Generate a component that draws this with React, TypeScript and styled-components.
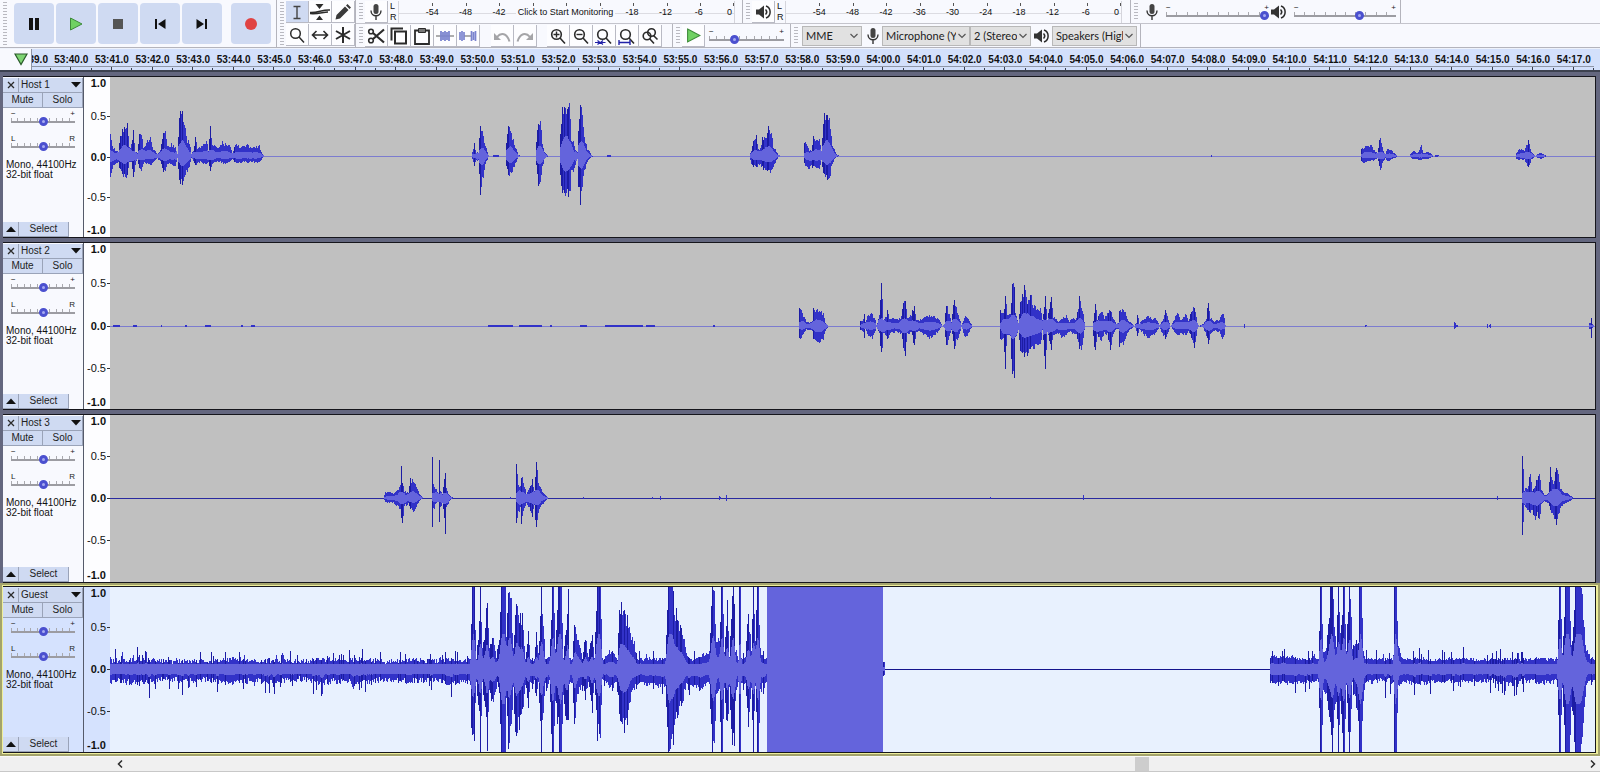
import React from "react";
import styled, { createGlobalStyle, css } from "styled-components";

const sans = `"Liberation Sans", Arial, sans-serif`;
const ui = `Lato, "Open Sans", sans-serif`;

const GlobalStyle = createGlobalStyle`
  *, *::before, *::after { box-sizing: border-box; }
  body { margin: 0; background: #f0f0f0; font-family: ${sans}; color: #111; }
  button, input, select { font: inherit; color: inherit; margin: 0; }
  button { padding: 0; border: 0; background: none; }
`;

/* ---------- toolbars ---------- */

const Window = styled.div`
  min-height: 100vh;
  display: flex;
  flex-direction: column;
  overflow: hidden;
`;

const Toolbars = styled.header`
  display: flex;
  height: 48px;
  background: #f8f9fe;
  border-bottom: 1px solid #b4b4bc;
`;

const Grip = styled.span`
  flex: none;
  width: 4px;
  margin: 2px 2px 2px 3px;
  background: repeating-linear-gradient(#b9b9c0 0 1px, transparent 1px 3px);
`;

const Transport = styled.div`
  display: flex;
  flex: none;
  width: 277px;
  border-right: 1px solid #b4b4bc;
`;

const TransportButton = styled.button<{ $apart?: boolean }>`
  display: grid;
  place-items: center;
  width: 40px;
  height: 41px;
  margin: 3px 2px 0 ${(p) => (p.$apart ? "7px" : "0")};
  border-radius: 4px;
  background: #cfdaf2;
`;

const Tools = styled.div`
  display: flex;
  flex: none;
  width: 79px;
  border-right: 1px solid #b4b4bc;
`;

const ToolGrid = styled.div`
  display: grid;
  grid-template: repeat(2, 23px) / repeat(3, 23px);
  padding-top: 1px;
`;

const ToolButton = styled.button<{ $on?: boolean }>`
  display: grid;
  place-items: center;
  flex: none;
  width: 23px;
  height: 22px;
  background: ${(p) => (p.$on ? "#cfdaf2" : "#fdfdff")};
  border-right: 1px solid #b9bac4;
  border-bottom: 1px solid #b9bac4;
`;

const Rows = styled.div`
  flex: 1;
  min-width: 0;
`;

const Row = styled.div`
  display: flex;
  height: 24px;
  border-bottom: 1px solid #c4c4cc;
  &:last-child { border-bottom: 0; height: 23px; }
`;

const Bar = styled.div<{ $w: number }>`
  display: flex;
  align-items: center;
  align-self: stretch;
  flex: none;
  width: ${(p) => p.$w}px;
  padding-top: 1px;
  border-right: 1px solid #b4b4bc;
  ${Grip} { align-self: stretch; }
`;

const Gap = styled.span<{ $w: number }>`
  flex: none;
  width: ${(p) => p.$w}px;
`;

const LR = styled.span`
  display: flex;
  flex-direction: column;
  flex: none;
  width: 10px;
  padding-left: 2px;
  font-size: 9px;
  line-height: 11px;
`;

const Meter = styled.div`
  display: flex;
  flex-direction: column;
  flex: none;
  width: 337px;
  height: 22px;
  padding-top: 2px;
  border-left: 1px solid #d5d5dc;
  border-right: 1px solid #d5d5dc;
  background: linear-gradient(#dcdce2, #dcdce2) 0 12px / 100% 1px no-repeat;
`;

const Scale = styled.div`
  display: flex;
`;

const MeterTick = styled.i<{ $end?: boolean }>`
  display: flex;
  flex: ${(p) => (p.$end ? 0.5 : 1)} 1 0;
  height: 3px;
  justify-content: ${(p) => (p.$end ? "flex-end" : "center")};
  &::before { content: ""; width: 1px; background: #555; }
`;

const MeterPad = styled.i`
  flex: 0.5 1 0;
`;

const MeterLabel = styled.span<{ $end?: boolean }>`
  flex: ${(p) => (p.$end ? 0.5 : 1)} 1 0;
  min-width: 0;
  text-align: ${(p) => (p.$end ? "right" : "center")};
  padding-right: ${(p) => (p.$end ? 2 : 0)}px;
  font-size: 9px;
  line-height: 12px;
`;

const MonitorButton = styled.button`
  flex: 3 1 0;
  min-width: 0;
  height: 13px;
  background: linear-gradient(#f8f9fe, #f8f9fe) center / 100px 100% no-repeat;
  font-size: 9px;
  line-height: 13px;
  white-space: nowrap;
`;

const SelectBox = styled.label<{ $w: number }>`
  display: grid;
  flex: none;
  width: ${(p) => p.$w}px;
  height: 20px;
  > * { grid-area: 1 / 1; }
  > svg { place-self: center end; margin-right: 4px; pointer-events: none; }
`;

const Select = styled.select`
  appearance: none;
  width: 100%;
  height: 20px;
  padding: 0 13px 0 3px;
  border: 1px solid #b8b8b8;
  border-radius: 0;
  background: #e1e1e1;
  font: 11px/16px ${ui};
  color: #222;
`;

const SliderBox = styled.label<{ $w: number }>`
  display: flex;
  flex-direction: column;
  flex: none;
  width: ${(p) => p.$w}px;
`;

const SliderMarks = styled.span`
  display: flex;
  justify-content: space-between;
  height: 7px;
  font-size: 8px;
  line-height: 8px;
  color: #222;
`;

const Range = styled.input`
  appearance: none;
  display: block;
  width: 100%;
  height: 9px;
  background:
    linear-gradient(#9c9ca2, #9c9ca2) 0 4px / 100% 2px no-repeat,
    repeating-linear-gradient(90deg, #a9a9ae 0 1px, transparent 1px 10%) 0 1px / 100% 4px no-repeat;
  &::-webkit-slider-thumb {
    appearance: none;
    width: 9px;
    height: 9px;
    border-radius: 50%;
    border: 3px solid #4b50cf;
    background: #a6aaf0;
  }
`;

/* ---------- timeline ---------- */

const Timeline = styled.div`
  display: flex;
  height: 24px;
  background: #d3e0fb;
  border-top: 1px solid #eef2fb;
  border-bottom: 2px solid #3d4250;
`;

const PinCell = styled.div`
  display: flex;
  justify-content: flex-end;
  flex: none;
  width: 32px;
  padding: 4px 3px 0 0;
  background: #f8f9fe;
  border-right: 1px solid #8f94a4;
`;

const TimeScale = styled.div`
  display: flex;
  flex: 1;
  min-width: 0;
  overflow: hidden;
`;

const TimeCell = styled.div<{ $cut?: boolean }>`
  display: flex;
  flex-direction: column;
  align-items: ${(p) => (p.$cut ? "flex-end" : "stretch")};
  flex: 0 0 ${(p) => (p.$cut ? "1.21%" : "2.5906%")};
  overflow: ${(p) => (p.$cut ? "hidden" : "visible")};
  padding-top: 5px;
`;

const TimeText = styled.span<{ $cut?: boolean }>`
  height: 12px;
  padding-right: ${(p) => (p.$cut ? 3 : 0)}px;
  font-size: 10px;
  font-weight: 700;
  line-height: 12px;
  text-align: center;
  white-space: nowrap;
`;

const TimeTicks = styled.span`
  display: flex;
  align-items: flex-end;
  width: 100%;
  height: 4px;
  border-top: 1px solid #8f97a8;
`;

const HalfTick = styled.i<{ $short?: boolean }>`
  flex: 1;
  height: ${(p) => (p.$short ? 2 : 3)}px;
  border-right: 1px solid #3a3f4c;
`;

/* ---------- tracks ---------- */

const Tracks = styled.main`
  flex: 1;
  padding-top: 4px;
  background: #64677f;
`;

const TrackFrame = styled.section<{ $selected?: boolean }>`
  padding: 0 4px 4px 3px;
  ${(p) =>
    p.$selected &&
    css`
      margin-top: -4px;
      padding: 1px 2px 1px 1px;
      border: 2px solid #a3a36c;
      background: #eeee9a;
    `}
`;

const TrackBody = styled.div<{ $h: number }>`
  display: flex;
  height: ${(p) => p.$h}px;
  border: solid #16161c;
  border-width: 1px 1px 1px 0;
`;

const Panel = styled.div<{ $selected?: boolean }>`
  display: flex;
  flex-direction: column;
  flex: none;
  width: 81px;
  padding-top: 1px;
  border-right: 1px solid #555a6a;
  background: ${(p) => (p.$selected ? "#d5e2fe" : "#f8f9fe")};
`;

const PanelRow = styled.div`
  display: flex;
  height: 15px;
`;

const PanelButton = styled.button<{ $w?: number; $menu?: boolean }>`
  display: flex;
  align-items: center;
  justify-content: ${(p) => (p.$menu ? "space-between" : "center")};
  flex: ${(p) => (p.$w ? `0 0 ${p.$w}px` : "1 1 0")};
  height: 15px;
  padding: ${(p) => (p.$menu ? "0 1px 0 2px" : "0")};
  border-right: 1px solid #9aa3b8;
  border-bottom: 1px solid #9aa3b8;
  background: #cfdaf2;
  font-size: 10px;
  line-height: 12px;
  color: #222;
`;

const PanelSlider = styled.div`
  display: flex;
  justify-content: center;
  height: 25px;
  padding-top: 2px;
`;

const Info = styled.p`
  flex: 1;
  margin: 0;
  padding: 2px 0 0 3px;
  font-size: 10px;
  line-height: 10px;
  white-space: nowrap;
`;

const Levels = styled.div<{ $selected?: boolean }>`
  display: flex;
  flex-direction: column;
  flex: none;
  width: 26px;
  background: ${(p) => (p.$selected ? "#d5e2fe" : "#fdfdff")};
`;

const Level = styled.span<{ $bold?: boolean; $tick?: boolean }>`
  display: flex;
  align-items: center;
  justify-content: flex-end;
  height: 13px;
  font-size: 11px;
  line-height: 13px;
  font-weight: ${(p) => (p.$bold ? 700 : 400)};
  &::after {
    content: "";
    width: 3px;
    height: 1px;
    margin-left: 1px;
    background: ${(p) => (p.$tick ? "#333" : "transparent")};
  }
`;

const LevelGap = styled.i<{ $n: number }>`
  flex: ${(p) => p.$n} 1 0;
`;

const WaveBox = styled.div<{ $selected?: boolean }>`
  flex: 1;
  min-width: 0;
  background: ${(p) => (p.$selected ? "#e8f1fe" : "#c0c0c0")};
  svg { display: block; width: 100%; height: 100%; }
`;

const ScrollBar = styled.footer`
  display: flex;
  align-items: center;
  height: 16px;
  padding: 0 3px 0 116px;
  background: #f0f0f0;
  border-top: 1px solid #fafafa;
  border-bottom: 1px solid #c8c8c8;
`;

const ScrollArrow = styled.button`
  display: grid;
  place-items: center;
  flex: none;
  width: 8px;
  height: 12px;
`;

const ScrollLane = styled.div`
  display: flex;
  flex: 1;
  height: 14px;
`;

const ScrollThumb = styled.span`
  width: 14px;
  margin-left: 69%;
  background: #cdcdcd;
`;

/* ---------- wave forms ---------- */

const LEFT = 110;
const WIDTH = 1485;

type Key = [number, number, number];

const parse = (s: string): Key[] =>
  s.trim().split(/\s+/).map((t) => {
    const [x, u, d] = t.split(",").map(Number);
    return [x, u, d === undefined ? u : d] as Key;
  });

const rnd = (n: number) => {
  const v = Math.sin(n * 127.1 + 11.7) * 43758.5453;
  return v - Math.floor(v);
};

interface WaveSpec {
  height: number;
  mid: number;
  keys: string;
  floor?: [number, number][];
  block?: [number, number];
  line: string;
  reach: number;
}

function columns(spec: WaveSpec) {
  const keys = parse(spec.keys);
  const up: number[] = [];
  const down: number[] = [];
  let k = 0;
  for (let i = 0; i < WIDTH; i++) {
    const x = LEFT + i;
    while (k < keys.length - 1 && keys[k + 1][0] <= x) k++;
    let u = 0;
    let d = 0;
    if (x >= keys[0][0] && k < keys.length - 1) {
      const [x0, u0, d0] = keys[k];
      const [x1, u1, d1] = keys[k + 1];
      const t = (x - x0) / (x1 - x0);
      u = u0 + (u1 - u0) * t;
      d = d0 + (d1 - d0) * t;
      if (u < 80) u *= 0.8 + 0.3 * rnd(x);
      if (d < 80) d *= 0.8 + 0.3 * rnd(x + 5000);
    }
    if (spec.floor?.some(([a, b]) => x >= a && x < b)) {
      const a = rnd(x * 3 + 1);
      const b = rnd(x * 5 + 2);
      const swell = Math.sin(x / 7) + Math.sin(x / 17);
      u = Math.max(u, 6 + 5 * rnd(x + 77) + (a > 0.85 ? (a - 0.85) * 75 : 0) + swell / 2);
      d = Math.max(d, 9 + 6 * rnd(x + 99) + (b > 0.85 ? (b - 0.85) * 100 : 0) + swell);
    }
    up.push(u);
    down.push(d);
  }
  return { up, down };
}

function inner(values: number[], reach: number, floor: (x: number) => number) {
  return values.map((v, i) => {
    let sum = 0;
    let n = 0;
    for (let j = Math.max(0, i - reach); j <= Math.min(values.length - 1, i + reach); j++) {
      sum += values[j];
      n++;
    }
    return Math.min(v * 0.9, Math.max(floor(LEFT + i), (sum / n) * 0.42));
  });
}

function outline(up: number[], down: number[], mid: number) {
  let top = "";
  let bottom = "";
  up.forEach((v, i) => {
    top += `L${i} ${mid - Math.round(v)}H${i + 1}`;
  });
  for (let i = down.length - 1; i >= 0; i--) {
    bottom += `L${i + 1} ${mid + Math.round(down[i])}H${i}`;
  }
  return `M0 ${mid}${top}${bottom}Z`;
}

/* single columns that rise well above the one before them get a darker edge */
function edges(up: number[], down: number[], mid: number) {
  let d = "";
  for (let i = 1; i < up.length; i++) {
    const rise = Math.max(up[i] - up[i - 1], down[i] - down[i - 1]);
    if (rise > 4) d += `M${i} ${mid - Math.round(up[i])}h1V${mid + Math.round(down[i])}h-1Z`;
  }
  return d;
}

function Wave({ spec }: { spec: WaveSpec }) {
  const { up, down } = columns(spec);
  const floor = (x: number) => (spec.floor?.some(([a, b]) => x >= a && x < b) ? 5 : 0);
  const { height, mid, block, reach } = spec;
  return (
    <svg viewBox={`0 0 ${WIDTH} ${height}`} preserveAspectRatio="none" shapeRendering="crispEdges" aria-hidden="true">
      <rect x="0" y={mid} width={WIDTH} height="1" fill={spec.line} />
      <path d={outline(up, down, mid)} fill="#3232c8" />
      <path d={edges(up, down, mid)} fill="#1c1ca4" />
      <path d={outline(inner(up, reach, floor), inner(down, reach, floor), mid)} fill="#6464dc" />
      {block && <rect x={block[0] - LEFT} y="0" width={block[1] - block[0]} height={height} fill="#6464dc" />}
    </svg>
  );
}

const host1 = `
110,25,20 112,9,12 115,6,8 118,4,6 120,20,15 123,30,20 125,30,22 127,37,23 129,8,6 131,12,6 133,24,22 135,5,8 137,3
139,26,15 141,26,15 143,8,7 146,14,8 150,18,10 153,7 157,2 160,6 163,25,17 165,25,17 167,9,8 171,12,9 175,9,10 177,2
179,40,28 182,45,28 185,28,20 187,15 189,15,10 191,2 193,5 195,20,10 197,8 200,8,6 203,13,8 206,16,9 208,6 210,27,14
212,12,8 216,9,6 219,9,6 222,14,7 225,12,8 229,11,6 232,3 235,12,7 239,10,7 243,10,6 247,12,7 251,8,6 255,9,6
259,11,7 261,4 263,1 264,0 471,0 474,12,10 476,3,5 478,4 480,31,38 483,20 485,10,8 488,1 489,0 492,0 493,1 498,1 499,0
505,0 506,12,10 508,30,20 511,22,18 515,10,8 518,1 521,0 535,0 536,15,10 538,38,28 540,38,30 542,14,12 544,4,3 548,0
559,0 560,24,20 562,50,38 564,48,39 566,52,38 569,49,41 570,46,38 571,14 573,14,15 575,6,8 577,4 578,24,30 580,48,47
582,48,33 584,20,16 587,8,6 591,1 593,0 606,0 607,1 610,1 611,0 749,0 751,5,8 753,14,10 756,20,13 758,7,9 760,8
762,18,12 765,19,16 768,28,17 771,25,16 773,10 778,1 781,0 803,0 804,13,8 806,15,12 809,6,12 811,6,10 813,18,12
816,18,13 819,18,12 821,5 822,20,12 824,42,20 827,46,25 830,30,18 832,10,7 836,2,1 839,0 1210,0 1211,1 1212,0
1360,0 1361,7,6 1365,10,7 1367,9,6 1371,11,5 1373,6,5 1377,3,2 1380,21,15 1383,5 1385,2 1387,8,6 1392,5,3 1396,1
1397,0 1409,0 1411,3 1413,6,3 1417,3 1421,10,5 1423,3 1428,5,3 1433,0 1437,1 1439,0 1515,0 1516,3 1518,6,4 1521,8,4
1524,5,4 1528,16,11 1531,4 1535,0 1537,2 1540,3 1547,0`;

const host2 = `
112,0 113,1 119,1 120,0 132,0 133,1 136,1 137,0 160,0 161,1 163,0 184,0 185,1 188,0 204,0 205,1 210,1 211,0 240,0
241,1 244,0 250,0 251,1 254,1 255,0 487,0 488,1 512,1 513,0 518,0 519,1 541,1 542,0 549,0 550,1 554,0 579,0 580,1 586,1
587,0 604,0 605,1 642,1 643,0 645,0 646,1 654,1 655,0 712,0 713,1 716,0
798,0 799,17,12 801,19,14 803,10,8 806,5,4 810,4 812,5 813,16,15 817,19,18 820,14,15 823,12,13 825,4,5 828,0
859,0 860,5,4 863,7,6 864,12 865,4 868,12,10 872,12 875,6,5 876,1 877,3 879,10,8 881,41,30 882,30,22 883,7 886,10
887,17,14 889,7,8 893,7,6 899,8,7 901,10,8 903,27,22 905,26,28 907,8 911,12,7 914,20 916,6,7 919,6,5 923,8 927,11,12
930,10,12 935,9 939,6,4 942,0 944,2 946,22 949,12,10 951,4 954,29,21 957,14 960,5 961,1 965,10,12 968,7,8 972,0
999,0 1000,15,14 1003,12 1005,30,40 1007,12,10 1010,12,10 1012,45,50 1014,40,52 1015,14 1018,3,4 1020,27 1024,38,30
1027,24,28 1031,30,24 1033,20,22 1040,18,22 1042,6,4 1045,30,40 1047,6,7 1051,28,22 1053,10 1058,5,8 1062,8,12
1066,10 1069,5,6 1072,8 1076,7,8 1079,28,25 1082,18,22 1084,4 1085,0 1092,0 1094,12,20 1095,27,24 1097,7,8 1101,16,15
1104,8 1107,12,8 1110,16,24 1113,7 1116,3 1118,3 1119,17,20 1124,17,18 1127,7 1132,2 1134,0 1136,4,5 1137,13,12 1139,3
1143,6,8 1147,10,11 1151,8,11 1156,7 1159,1 1163,8,10 1165,16,12 1167,10,8 1170,0 1173,5 1177,14,10 1180,6,7
1186,12,10 1188,5 1191,14,12 1194,20,22 1197,3 1199,0 1203,2 1206,8,10 1208,27,20 1210,8 1214,5 1219,6 1222,14,12
1224,8,10 1225,1 1226,0 1243,0 1244,2 1245,0 1364,0 1365,1 1367,0 1453,0 1454,4,3 1456,1 1458,0 1486,0 1487,2 1488,0
1490,2 1491,0 1588,0 1589,3 1590,3 1591,10,14 1592,2 1594,0`;

const host3 = `
383,0 385,6,4 390,6,5 393,4,5 397,8 400,12 401,31,20 402,18,27 404,7,8 408,6 410,19,12 413,17,13 416,12,9 419,4,3
423,0 431,0 432,50,32 433,15,12 436,8,5 438,5 439,35,24 440,8,10 442,4,5 444,20 445,27,38 446,10 449,3 453,0 509,0
510,1 511,0 515,0 516,32,24 518,14,16 520,12,10 521,24,28 523,15,12 526,5,6 529,10 532,18 534,8 536,39,32 538,18,14
541,9,8 544,4 548,0 582,0 583,1 584,0 651,0 652,1 654,0 659,0 660,2 661,0 718,0 719,2 721,0 725,0 726,3 727,0 989,0
990,1 991,0 1082,0 1083,3,2 1084,0 1496,0 1497,2 1498,0 1521,0 1522,46,42 1524,8 1528,12 1530,28,15 1532,8,12
1534,12,22 1537,20,18 1539,24,26 1541,8,6 1544,3 1548,5 1550,28,14 1553,14,20 1556,32,28 1558,24,18 1560,10 1563,7
1568,4 1573,0`;

const guest = `
470,10,15 471,50,60 472,83,76 474,83,72 476,10,12 479,48,50 480,83,83 482,20,15 485,40,40 487,72,78 489,20,20
493,32,40 496,12,12 499,30,25 501,83,83 505,83,83 506,30,30 508,76,80 511,68,60 513,20,20 515,64,68 519,56,58
522,52,44 525,10,16 528,38,40 530,10,12 534,10,14 536,40,30 538,10,12 541,83,83 543,50,40 545,9,11 549,12,12
551,55,60 552,83,83 553,83,83 555,20,30 558,83,60 559,83,83 561,83,83 563,10,30 567,60,60 568,80,50 569,10,14
572,8,14 574,44,52 578,28,24 582,12,16 585,36,30 588,12,12 592,40,42 594,12,10 597,83,68 600,83,64 602,10,12
612,18,20 617,10,10 619,60,54 622,64,62 626,52,58 628,50,50 630,34,30 634,26,20 637,10,15 650,10,16 665,11,18
668,83,83 672,83,77 675,58,55 678,50,44 683,37,30 686,15,15 692,8,16 700,14,20 709,18,14 712,83,83 714,74,74
716,30,25 719,28,20 721,83,83 722,83,83 724,20,20 727,66,64 729,12,20 732,79,76 734,79,78 735,20,30 738,10,15
739,83,83 740,83,83 741,12,15 745,12,12 748,55,55 751,20,20 753,79,83 755,30,20 757,83,83 758,83,83 760,20,20
763,10,12 767,10,12 768,0 882,0 883,8,7 884,8,7 885,0 1269,0 1270,13,14 1318,10,12 1320,83,83 1321,83,83
1323,20,25 1326,20,22 1329,55,55 1330,83,60 1332,83,83 1334,50,40 1336,20,40 1338,83,83 1340,35,40 1343,83,83
1344,83,83 1346,20,20 1349,83,83 1350,79,79 1352,20,12 1358,30,50 1359,83,83 1361,83,83 1363,20,30 1365,10,12
1393,8 1394,83,83 1396,83,83 1398,25,16 1402,10,14 1557,10 1558,50 1559,83,83 1560,83,83 1562,20,20 1565,83,83
1569,83,83 1571,25,40 1573,40,50 1575,83,83 1580,83,83 1582,70,70 1584,40,44 1586,20,15 1590,12 1595,10`;

interface TrackSpec extends WaveSpec {
  name: string;
  frame: number;
  selected?: boolean;
}

const tracks: TrackSpec[] = [
  { name: "Host 1", frame: 162, height: 160, mid: 79, keys: host1, line: "#7c7ccf", reach: 3 },
  { name: "Host 2", frame: 168, height: 166, mid: 83, keys: host2, line: "#7c7ccf", reach: 3 },
  { name: "Host 3", frame: 169, height: 167, mid: 83, keys: host3, line: "#2a2aa0", reach: 3 },
  {
    name: "Guest",
    frame: 167,
    height: 165,
    mid: 82,
    keys: guest,
    line: "#14148c",
    reach: 1,
    floor: [[110, 767], [1270, 1595]],
    block: [767, 883],
    selected: true,
  },
];

/* ---------- icons ---------- */

const Svg = ({ w = 18, h = 18, vb, children }: { w?: number; h?: number; vb?: string; children: React.ReactNode }) => (
  <svg width={w} height={h} viewBox={vb ?? `0 0 ${w} ${h}`} fill="none" stroke="#2b2b2b" strokeWidth="1.6" aria-hidden="true">
    {children}
  </svg>
);

const Mic = () => (
  <Svg w={14} h={18}>
    <rect x="4.500" y="1" width="5" height="10" rx="2.500" fill="#444" stroke="none" />
    <path d="M2 7.500c0 7 10 7 10 0M7 12.800v4.200" stroke="#333" strokeWidth="1.400" />
  </Svg>
);

const Speaker = () => (
  <Svg w={17} h={16}>
    <path d="M1 5.500h3l5-4v13l-5-4H1z" fill="#333" stroke="none" />
    <path d="M10.500 5.500c1.500 1.500 1.500 3.500 0 5M11 2c5.500 2 5.500 10 0 12" strokeWidth="1.500" />
  </Svg>
);

const PlayIcon = ({ s = 14 }: { s?: number }) => (
  <Svg w={s} h={s} vb="0 0 14 14">
    <path d="M1.500 1l11.500 6-11.500 6z" fill="#6fd163" stroke="#3d8a3a" strokeWidth="1" />
  </Svg>
);

const lens = "M7.500 7.500m-4.800 0a4.800 4.800 0 1 0 9.600 0a4.800 4.800 0 1 0-9.600 0M11 11l5 5.500";

const toolIcons: [string, React.ReactNode][] = [
  ["Selection", <Svg key="s"><path d="M5.500 3.500h7M9 3.500v12M5.500 15.500h7" stroke="#444" strokeWidth="1.400" /></Svg>],
  [
    "Envelope",
    <Svg key="e" w={20}>
      <path d="M0 9.500c8 .5 12-3 20-2.500M0 10.500c8 .8 13-1.500 18-1.500" strokeWidth="1.500" />
      <path d="M5.500 1h8l-4 5zM6 17h7l-3.500-4.500z" fill="#2b2b2b" stroke="none" />
    </Svg>,
  ],
  [
    "Draw",
    <Svg key="d">
      <path d="M1.500 16.500l1-4.500 8.500-8.500 3.500 3.500L6 15.500zM12 2.500l1.500-1.500 3.500 3.500-1.500 1.500z" fill="#3a3a3a" stroke="none" />
    </Svg>,
  ],
  ["Zoom", <Svg key="z"><path d={lens} strokeWidth="1.500" /></Svg>],
  ["Time Shift", <Svg key="t"><path d="M2 9h14M5.500 5L1.500 9l4 4M12.500 5l4 4-4 4" /></Svg>],
  ["Multi-Tool", <Svg key="m"><path d="M9 1v16M2 5l14 8M2 13l14-8" strokeWidth="2" /></Svg>],
];

const editIcons: [string, React.ReactNode][] = [
  [
    "Cut",
    <Svg key="c">
      <circle cx="4" cy="4.500" r="2.300" />
      <circle cx="4" cy="13.500" r="2.300" />
      <path d="M6 6l11 9.500M6 12l11-9.500" strokeWidth="2.200" />
    </Svg>,
  ],
  [
    "Copy",
    <Svg key="o">
      <path d="M5 4.500h11v12H5z" strokeWidth="2" />
      <path d="M1.500 13.500V1.500H13" strokeWidth="2" />
    </Svg>,
  ],
  [
    "Paste",
    <Svg key="p">
      <path d="M2 3.500h14v13.500h-14z" strokeWidth="1.800" />
      <path d="M5.500 1.500h7v4h-7z" fill="#777" strokeWidth="1" />
    </Svg>,
  ],
  [
    "Trim",
    <Svg key="t">
      <path d="M0 9h18" stroke="#777" strokeWidth="1.200" />
      <path d="M5 4v10M7 5v8M9 4v10M11 5v8M13 4v10" stroke="#7b84cf" strokeWidth="1.800" />
    </Svg>,
  ],
  [
    "Silence",
    <Svg key="i">
      <path d="M5 9h8" stroke="#777" strokeWidth="1.200" />
      <path d="M1 5v8M3 4v10M5 5v8M12.500 4v10M14.500 5v8M16.500 4v10" stroke="#7b84cf" strokeWidth="1.700" />
    </Svg>,
  ],
];

const undoIcons: [string, React.ReactNode][] = [
  [
    "Undo",
    <Svg key="u">
      <path d="M4 10c4-5 10-4 12.500 4.500" stroke="#a5a5a8" strokeWidth="2" />
      <path d="M1 6v7h7z" fill="#a5a5a8" stroke="none" />
    </Svg>,
  ],
  [
    "Redo",
    <Svg key="r">
      <path d="M14 10c-4-5-10-4-12.500 4.500" stroke="#a5a5a8" strokeWidth="2" />
      <path d="M17 6v7h-7z" fill="#a5a5a8" stroke="none" />
    </Svg>,
  ],
];

const zoomIcons: [string, React.ReactNode][] = [
  ["Zoom In", <Svg key="a"><path d={lens} /><path d="M4.500 7.500h6M7.500 4.500v6" strokeWidth="1.400" /></Svg>],
  ["Zoom Out", <Svg key="b"><path d={lens} /><path d="M4.500 7.500h6" strokeWidth="1.400" /></Svg>],
  [
    "Fit Selection",
    <Svg key="c">
      <path d={lens} />
      <path d="M0 15.500h4.500M6 15.500h4.500M2.500 13.500l2.500 2-2.500 2M8 13.500l-2.500 2 2.500 2" stroke="#2222a8" strokeWidth="1.200" />
    </Svg>,
  ],
  [
    "Fit Project",
    <Svg key="d">
      <path d={lens} />
      <path d="M1 15.500h11M1 13v5M12 13v5" stroke="#2222a8" strokeWidth="1.400" />
    </Svg>,
  ],
  [
    "Zoom Toggle",
    <Svg key="e">
      <circle cx="10.500" cy="5.500" r="3.800" />
      <circle cx="6" cy="9" r="3.800" />
      <path d="M8.500 11.500l4.500 5M12.500 8.500l4 4" />
    </Svg>,
  ],
];

/* ---------- parts ---------- */

function Slider({ label, value, width, ends = ["−", "+"] }: { label: string; value: number; width: number; ends?: string[] }) {
  return (
    <SliderBox $w={width}>
      <SliderMarks>
        <span>{ends[0]}</span>
        <span>{ends[1]}</span>
      </SliderMarks>
      <Range type="range" min="0" max="100" defaultValue={value} aria-label={label} />
    </SliderBox>
  );
}

function Pick({ label, value, width }: { label: string; value: string; width: number }) {
  return (
    <SelectBox $w={width}>
      <Select aria-label={label} defaultValue={value}>
        <option>{value}</option>
      </Select>
      <Svg w={8} h={6}>
        <path d="M.5 1L4 4.500 7.500 1" stroke="#555" strokeWidth="1.200" />
      </Svg>
    </SelectBox>
  );
}

const levels = ["-54", "-48", "-42", "-36", "-30", "-24", "-18", "-12", "-6"];

function LevelMeter({ monitor }: { monitor?: boolean }) {
  const shown = monitor ? [...levels.slice(0, 3), "", ...levels.slice(6)] : levels;
  return (
    <>
      <LR>
        <span>L</span>
        <span>R</span>
      </LR>
      <Meter>
        <Scale>
          <MeterPad />
          {levels.map((l) => <MeterTick key={l} />)}
          <MeterTick $end />
        </Scale>
        <Scale>
          <MeterPad />
          {shown.map((l) =>
            l ? <MeterLabel key={l}>{l}</MeterLabel> : <MonitorButton key="monitor">Click to Start Monitoring</MonitorButton>,
          )}
          <MeterLabel $end>0</MeterLabel>
        </Scale>
      </Meter>
    </>
  );
}

const buttons = (list: [string, React.ReactNode][]) =>
  list.map(([name, icon]) => (
    <ToolButton key={name} aria-label={name} $on={name === "Selection"}>
      {icon}
    </ToolButton>
  ));

const times = Array.from({ length: 38 }, (_, i) => {
  const s = 40 + i;
  return `${53 + Math.floor(s / 60)}:${String(s % 60).padStart(2, "0")}.0`;
});

function Track({ spec }: { spec: TrackSpec }) {
  const { name, selected, frame } = spec;
  return (
    <TrackFrame $selected={selected} aria-label={name}>
      <TrackBody $h={frame}>
        <Panel $selected={selected}>
          <PanelRow>
            <PanelButton $w={16} aria-label={`Close ${name}`}>
              <Svg w={8} h={8}><path d="M1 1l6 6M7 1L1 7" strokeWidth="1.300" /></Svg>
            </PanelButton>
            <PanelButton $menu>
              {name}
              <Svg w={10} h={6}><path d="M0 0h10L5 5.500z" fill="#111" stroke="none" /></Svg>
            </PanelButton>
          </PanelRow>
          <PanelRow>
            <PanelButton>Mute</PanelButton>
            <PanelButton>Solo</PanelButton>
          </PanelRow>
          <PanelSlider><Slider label={`${name} gain`} value={50} width={64} /></PanelSlider>
          <PanelSlider><Slider label={`${name} pan`} value={50} width={64} ends={["L", "R"]} /></PanelSlider>
          <Info>
            Mono, 44100Hz
            <br />
            32-bit float
          </Info>
          <PanelRow>
            <PanelButton $w={16} aria-label={`Collapse ${name}`}>
              <Svg w={10} h={6}><path d="M0 6h10L5 .5z" fill="#111" stroke="none" /></Svg>
            </PanelButton>
            <PanelButton $w={50}>Select</PanelButton>
          </PanelRow>
        </Panel>
        <Levels $selected={selected}>
          <Level $bold>1.0</Level>
          <LevelGap $n={20} />
          <Level $tick>0.5</Level>
          <LevelGap $n={27} />
          <Level $bold $tick>0.0</Level>
          <LevelGap $n={27} />
          <Level $tick>-0.5</Level>
          <LevelGap $n={20} />
          <Level $bold>-1.0</Level>
        </Levels>
        <WaveBox $selected={selected}><Wave spec={spec} /></WaveBox>
      </TrackBody>
    </TrackFrame>
  );
}

export default function App() {
  return (
    <Window>
      <GlobalStyle />
      <Toolbars>
        <Transport>
          <Grip />
          <Gap $w={5} />
          <TransportButton aria-label="Pause">
            <Svg w={12} h={12}><path d="M1 0h4v12H1zM7 0h4v12H7z" fill="#111" stroke="none" /></Svg>
          </TransportButton>
          <TransportButton aria-label="Play"><PlayIcon /></TransportButton>
          <TransportButton aria-label="Stop">
            <Svg w={12} h={12}><path d="M1 1h10v10H1z" fill="#555" stroke="none" /></Svg>
          </TransportButton>
          <TransportButton aria-label="Skip to Start">
            <Svg w={12} h={12}><path d="M1 1h2v10H1zM11.500 1v10L4 6z" fill="#111" stroke="none" /></Svg>
          </TransportButton>
          <TransportButton aria-label="Skip to End">
            <Svg w={12} h={12}><path d="M9 1h2v10H9zM.5 1v10L8 6z" fill="#111" stroke="none" /></Svg>
          </TransportButton>
          <TransportButton $apart aria-label="Record">
            <Svg w={12} h={12}><circle cx="6" cy="6" r="6" fill="#e04343" stroke="none" /></Svg>
          </TransportButton>
        </Transport>
        <Tools>
          <Grip />
          <ToolGrid>{buttons(toolIcons)}</ToolGrid>
        </Tools>
        <Rows>
          <Row>
            <Bar $w={387}>
              <Grip />
              <ToolButton aria-label="Record Meter"><Mic /></ToolButton>
              <LevelMeter monitor />
            </Bar>
            <Bar $w={388}>
              <Grip />
              <ToolButton aria-label="Playback Meter"><Speaker /></ToolButton>
              <LevelMeter />
            </Bar>
            <Bar $w={270}>
              <Grip />
              <Gap $w={5} />
              <Mic />
              <Gap $w={7} />
              <Slider label="Recording volume" value={100} width={103} />
              <Gap $w={1} />
              <Speaker />
              <Gap $w={7} />
              <Slider label="Playback volume" value={66} width={102} />
            </Bar>
          </Row>
          <Row>
            <Bar $w={317}>
              <Grip />
              {buttons(editIcons)}
              <Gap $w={11} />
              {buttons(undoIcons)}
              <Gap $w={10} />
              {buttons(zoomIcons)}
            </Bar>
            <Bar $w={118}>
              <Grip />
              <ToolButton aria-label="Play at Speed"><PlayIcon s={15} /></ToolButton>
              <Gap $w={4} />
              <Slider label="Playback speed" value={32} width={75} />
            </Bar>
            <Bar $w={350}>
              <Grip />
              <Gap $w={2} />
              <Pick label="Audio host" value="MME" width={60} />
              <Gap $w={4} />
              <Mic />
              <Gap $w={2} />
              <Pick label="Recording device" value="Microphone (Ye" width={88} />
              <Pick label="Recording channels" value="2 (Stereo)" width={61} />
              <Gap $w={2} />
              <Speaker />
              <Gap $w={2} />
              <Pick label="Playback device" value="Speakers (High" width={85} />
            </Bar>
          </Row>
        </Rows>
      </Toolbars>
      <Timeline>
        <PinCell>
          <Svg w={14} h={13}><path d="M1 1h12L7 11.500z" fill="#7ed472" stroke="#2a5a2a" strokeWidth="1.200" /></Svg>
        </PinCell>
        <TimeScale>
          <TimeCell $cut>
            <TimeText $cut>53:39.0</TimeText>
            <TimeTicks><HalfTick $short /></TimeTicks>
          </TimeCell>
          {times.map((t) => (
            <TimeCell key={t}>
              <TimeText>{t}</TimeText>
              <TimeTicks>
                <HalfTick />
                <HalfTick $short />
              </TimeTicks>
            </TimeCell>
          ))}
        </TimeScale>
      </Timeline>
      <Tracks>
        {tracks.map((t) => <Track key={t.name} spec={t} />)}
      </Tracks>
      <ScrollBar>
        <ScrollArrow aria-label="Scroll left">
          <Svg w={6} h={8}><path d="M5 .5L1.500 4 5 7.500" strokeWidth="1.500" /></Svg>
        </ScrollArrow>
        <ScrollLane><ScrollThumb /></ScrollLane>
        <ScrollArrow aria-label="Scroll right">
          <Svg w={6} h={8}><path d="M1 .5L4.500 4 1 7.500" strokeWidth="1.500" /></Svg>
        </ScrollArrow>
      </ScrollBar>
    </Window>
  );
}
